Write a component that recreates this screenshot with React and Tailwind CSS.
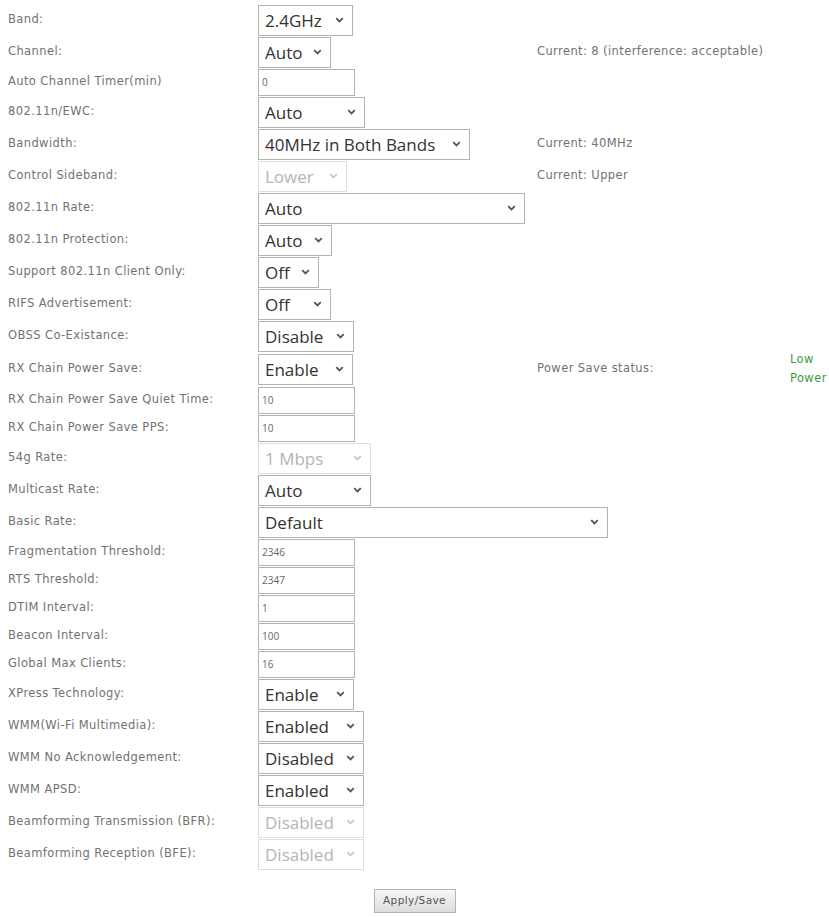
import React from 'react';

const rows = [
  { label: 'Band:', type: 'select', value: '2.4GHz', w: 'w-[95px]' },
  { label: 'Channel:', type: 'select', value: 'Auto', w: 'w-[73px]', note: 'Current: 8 (interference: acceptable)' },
  { label: 'Auto Channel Timer(min)', type: 'input', value: '0' },
  { label: '802.11n/EWC:', type: 'select', value: 'Auto', w: 'w-[107px]' },
  { label: 'Bandwidth:', type: 'select', value: '40MHz in Both Bands', w: 'w-[212px]', note: 'Current: 40MHz' },
  { label: 'Control Sideband:', type: 'select', value: 'Lower', w: 'w-[89px]', disabled: true, note: 'Current: Upper' },
  { label: '802.11n Rate:', type: 'select', value: 'Auto', w: 'w-[267px]' },
  { label: '802.11n Protection:', type: 'select', value: 'Auto', w: 'w-[74px]' },
  { label: 'Support 802.11n Client Only:', type: 'select', value: 'Off', w: 'w-[61px]' },
  { label: 'RIFS Advertisement:', type: 'select', value: 'Off', w: 'w-[73px]' },
  { label: 'OBSS Co-Existance:', type: 'select', value: 'Disable', w: 'w-[96px]' },
  { label: 'RX Chain Power Save:', type: 'select', value: 'Enable', w: 'w-[95px]', note: 'Power Save status:', status: true, h: 'h-[34px]' },
  { label: 'RX Chain Power Save Quiet Time:', type: 'input', value: '10' },
  { label: 'RX Chain Power Save PPS:', type: 'input', value: '10' },
  { label: '54g Rate:', type: 'select', value: '1 Mbps', w: 'w-[113px]', disabled: true },
  { label: 'Multicast Rate:', type: 'select', value: 'Auto', w: 'w-[113px]' },
  { label: 'Basic Rate:', type: 'select', value: 'Default', w: 'w-[350px]' },
  { label: 'Fragmentation Threshold:', type: 'input', value: '2346' },
  { label: 'RTS Threshold:', type: 'input', value: '2347' },
  { label: 'DTIM Interval:', type: 'input', value: '1' },
  { label: 'Beacon Interval:', type: 'input', value: '100' },
  { label: 'Global Max Clients:', type: 'input', value: '16' },
  { label: 'XPress Technology:', type: 'select', value: 'Enable', w: 'w-[96px]' },
  { label: 'WMM(Wi-Fi Multimedia):', type: 'select', value: 'Enabled', w: 'w-[106px]' },
  { label: 'WMM No Acknowledgement:', type: 'select', value: 'Disabled', w: 'w-[106px]' },
  { label: 'WMM APSD:', type: 'select', value: 'Enabled', w: 'w-[106px]' },
  { label: 'Beamforming Transmission (BFR):', type: 'select', value: 'Disabled', w: 'w-[106px]', disabled: true },
  { label: 'Beamforming Reception (BFE):', type: 'select', value: 'Disabled', w: 'w-[106px]', disabled: true },
];

function Chevron({ disabled }) {
  return (
    <svg width="9" height="6" viewBox="0 0 9 6" className="shrink-0">
      <path
        d="M1.2 1.2 L4.5 4.4 L7.8 1.2"
        fill="none"
        stroke={disabled ? '#c8c8c8' : '#555'}
        strokeWidth="1.8"
      />
    </svg>
  );
}

function FakeSelect({ value, w, disabled }) {
  return (
    <div
      className={`${w} h-[31px] flex items-center justify-between pl-[6px] pr-[8px] border bg-white text-[17px] font-['Open_Sans',sans-serif] ${
        disabled ? 'border-[#dedede] text-[#b4b4b4]' : 'border-[#b3b3b3] text-[#333]'
      }`}
    >
      <span className="whitespace-nowrap leading-none">{value}</span>
      <Chevron disabled={disabled} />
    </div>
  );
}

function FakeInput({ value }) {
  return (
    <div className="w-[97px] h-[27px] flex items-center pl-[3px] border border-[#b3b3b3] bg-white text-[10px] text-[#666] font-['Open_Sans',sans-serif]">
      {value}
    </div>
  );
}

export default function App() {
  return (
    <div className="min-h-screen bg-white pt-[4px] pl-[8px] font-['DejaVu_Sans',sans-serif] text-[11.5px] tracking-[0.4px] text-[#727272]">
      {rows.map((row) => (
        <div
          key={row.label}
          className={`flex items-center ${row.h ? row.h : row.type === 'input' ? 'h-[28px]' : 'h-[32px]'}`}
        >
          <div className="w-[250px] shrink-0 whitespace-nowrap">{row.label}</div>
          <div className="w-[279px] shrink-0 tracking-normal">
            {row.type === 'select' ? (
              <FakeSelect value={row.value} w={row.w} disabled={row.disabled} />
            ) : (
              <FakeInput value={row.value} />
            )}
          </div>
          {row.note && <div className="w-[253px] shrink-0 whitespace-nowrap">{row.note}</div>}
          {row.status && (
            <div className="w-[40px] leading-[19px] text-[#3d9b3d]">Low Power</div>
          )}
        </div>
      ))}

      <div className="flex justify-center pt-[19px] pr-[8px]">
        <button className="w-[82px] h-[24px] border border-[#b5b5b5] bg-gradient-to-b from-[#f7f7f7] to-[#dcdcdc] text-[10.5px] text-[#555] font-['DejaVu_Sans',sans-serif]">
          Apply/Save
        </button>
      </div>
    </div>
  );
}
